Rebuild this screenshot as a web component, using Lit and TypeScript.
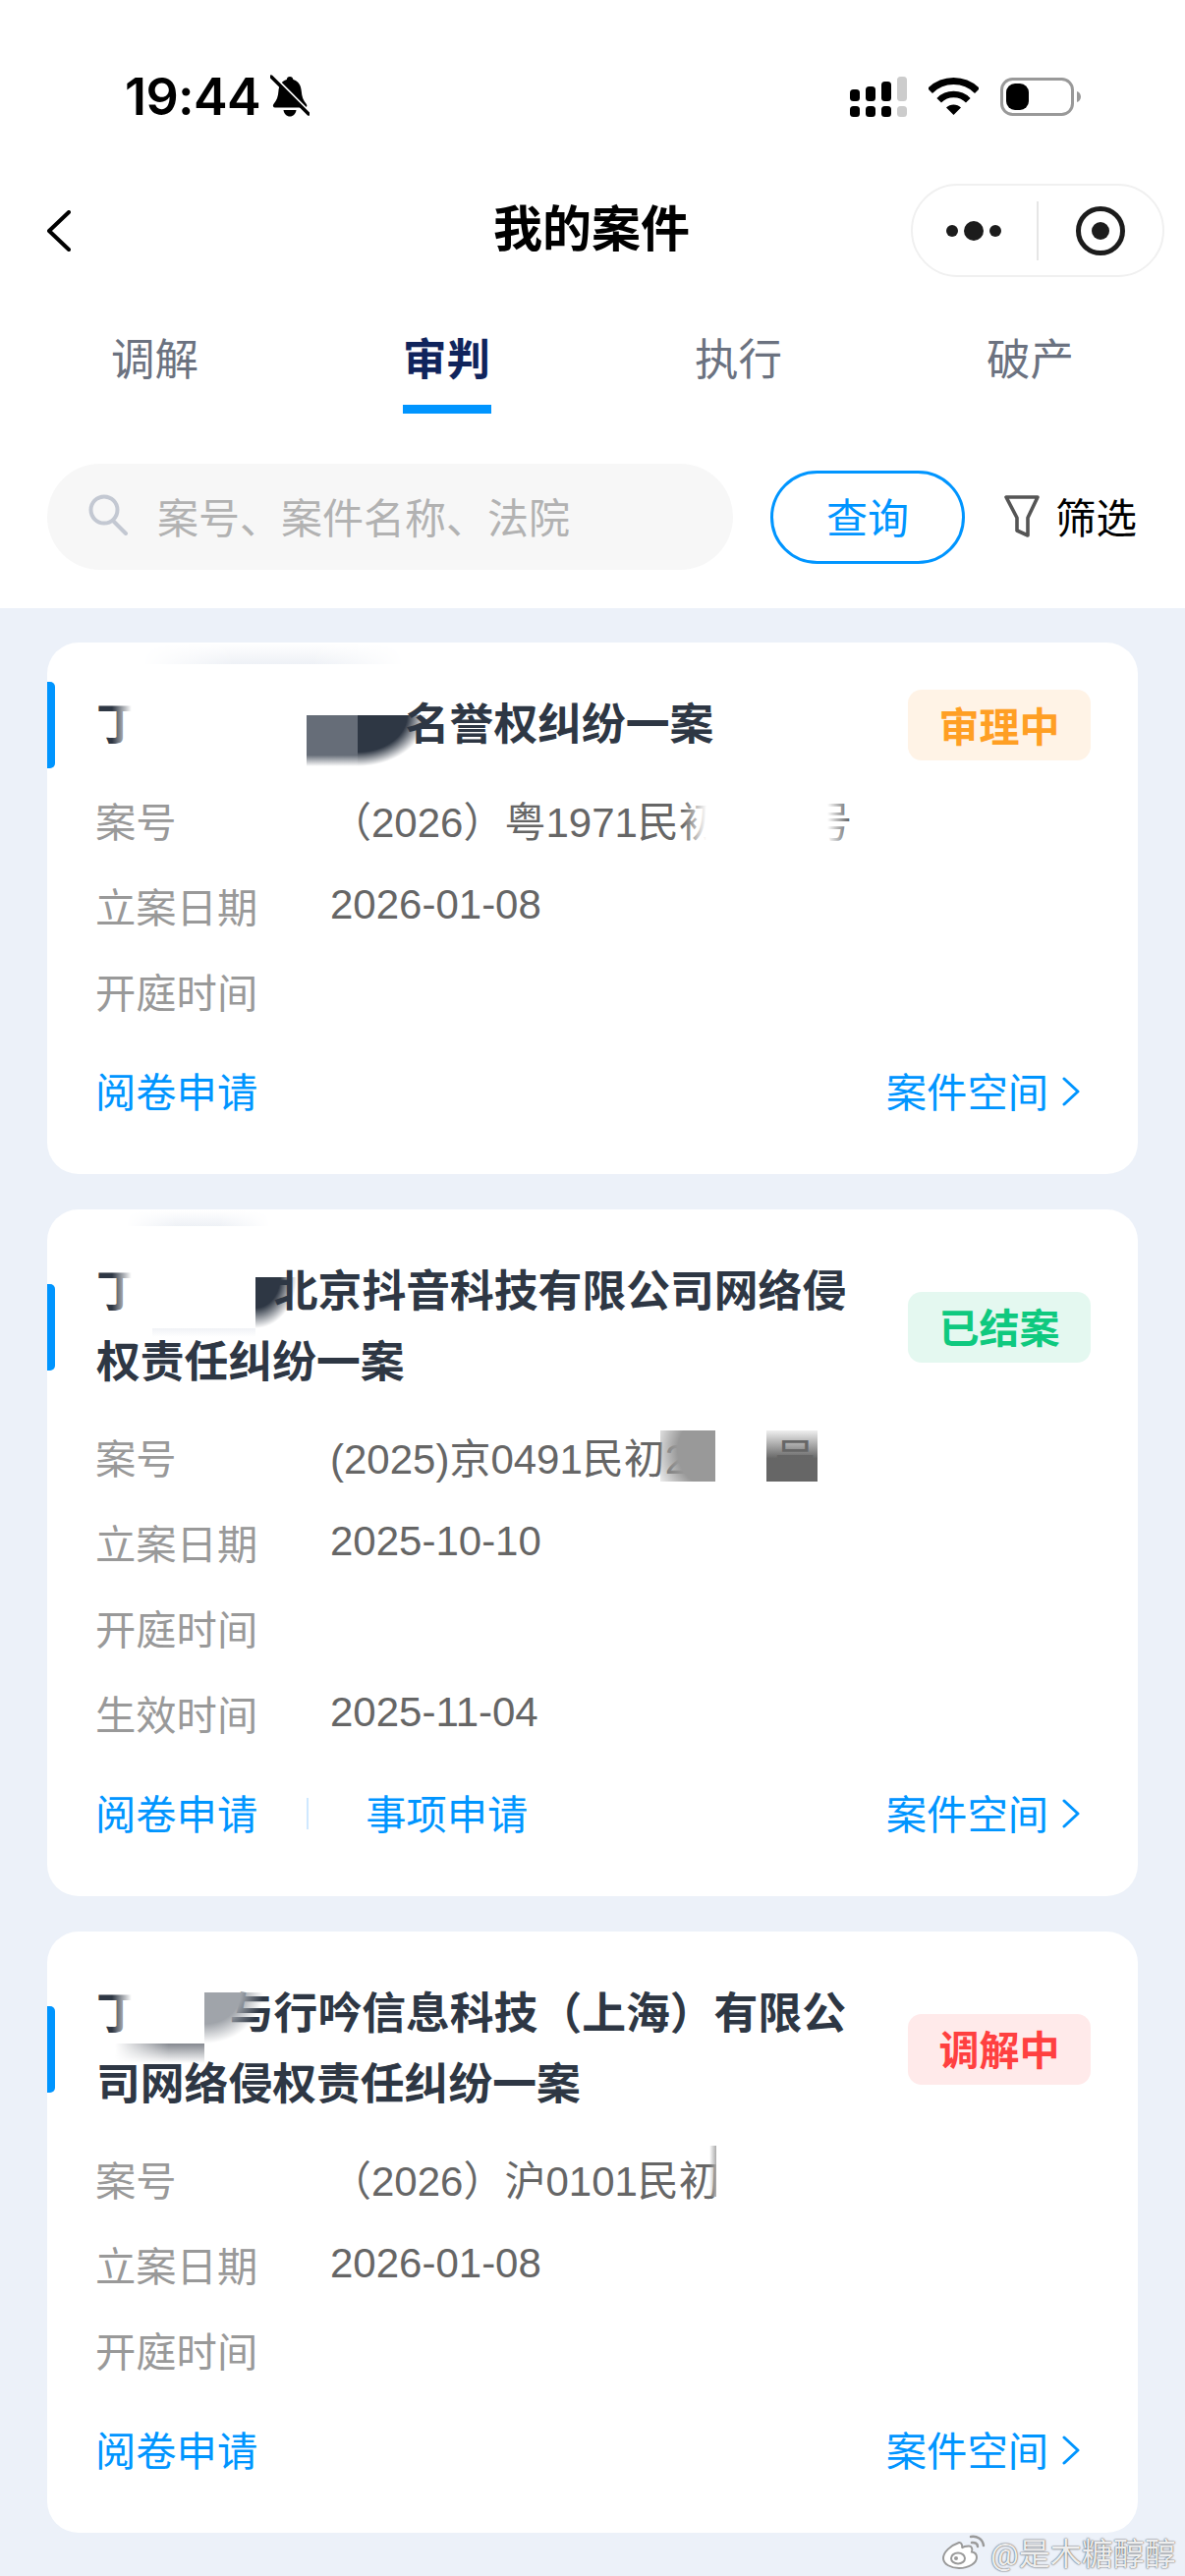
import { LitElement, html, css, svg, nothing } from "lit"
import { customElement } from "lit/decorators.js"

type Seg = [string, number, string]

interface Case {
  title: Seg
  titleMore?: string
  status: string
  tone: string
  rows: { label: string; value?: Seg | string }[]
  extra?: boolean
  patches: string[]
}

const cases: Case[] = [
  {
    title: ["丁", 270, "名誉权纠纷一案"],
    status: "审理中",
    tone: "orange",
    rows: [
      { label: "案号", value: ["（2026）粤1971民初", 92, "号"] },
      { label: "立案日期", value: "2026-01-08" },
      { label: "开庭时间" },
    ],
    patches: ["c1-smudge", "c1-fade", "c1-gray", "c1-dark", "c1-val-a", "c1-val-b"],
  },
  {
    title: ["丁", 136, "北京抖音科技有限公司网络侵"],
    titleMore: "权责任纠纷一案",
    status: "已结案",
    tone: "green",
    rows: [
      { label: "案号", value: ["(2025)京0491民初2", 88, "号"] },
      { label: "立案日期", value: "2025-10-10" },
      { label: "开庭时间" },
      { label: "生效时间", value: "2025-11-04" },
    ],
    extra: true,
    patches: ["c2-smudge", "c2-fade", "c2-dark", "c2-low", "c2-val-a", "c2-val-b"],
  },
  {
    title: ["丁", 91, "与行吟信息科技（上海）有限公"],
    titleMore: "司网络侵权责任纠纷一案",
    status: "调解中",
    tone: "red",
    rows: [
      { label: "案号", value: "（2026）沪0101民初" },
      { label: "立案日期", value: "2026-01-08" },
      { label: "开庭时间" },
    ],
    patches: ["c3-fade", "c3-gray", "c3-low", "c3-strip"],
  },
]

const tabs = ["调解", "审判", "执行", "破产"]

const bell = svg`<svg class="bell" width="40" height="44" viewBox="0 0 40 44">
  <path d="M20 2c2 0 3 1.300 3.400 3 5.600 1.600 8 6.200 8.400 12 .3 5 1.700 9 5 13 1.200 1.600.4 3.500-1.600 3.500H5c-2 0-2.800-1.900-1.600-3.500 3.300-4 4.700-8 5-13 .4-5.800 2.800-10.400 8.400-12C17 3.300 18 2 20 2z" fill="#000"/>
  <path d="M13.500 36h13c-.6 4-3.200 6.500-6.500 6.500S14.100 40 13.500 36z" fill="#000"/>
  <path d="M-1 4 37 42" stroke="#fff" stroke-width="4" transform="translate(3 -3)"/>
  <path d="M1 2 39 40" stroke="#000" stroke-width="3.400" stroke-linecap="round"/>
</svg>`

const signal = svg`<svg width="58" height="41" viewBox="0 0 58 41">
  <rect x="0" y="13" width="10" height="12" rx="3.500"/>
  <rect x="16" y="10" width="10" height="15" rx="3.500"/>
  <rect x="32" y="5" width="10" height="20" rx="3.500"/>
  <rect x="48" y="0" width="10" height="25" rx="3.500" fill="#ccc"/>
  <rect x="0" y="30" width="10" height="11" rx="3.500"/>
  <rect x="16" y="30" width="10" height="11" rx="3.500"/>
  <rect x="32" y="30" width="10" height="11" rx="3.500"/>
  <rect x="48" y="30" width="10" height="11" rx="3.500" fill="#ccc"/>
</svg>`

const wifi = svg`<svg width="51" height="38" viewBox="0 0 51 38" fill="none" stroke="#000">
  <path d="M1.500 13.500a34 34 0 0 1 48 0" stroke-width="7"/>
  <path d="M10.700 23.200a21 21 0 0 1 29.600 0" stroke-width="6.500"/>
  <path d="M25.500 38 18 30.500a10.600 10.600 0 0 1 15 0z" fill="#000" stroke="none"/>
</svg>`

const battery = svg`<svg width="82" height="39" viewBox="0 0 82 39">
  <rect x="1.500" y="1.500" width="72" height="36" rx="11" fill="#fff" stroke="#999" stroke-width="3"/>
  <rect x="6" y="6" width="23" height="27" rx="9" fill="#000"/>
  <path d="M78 14c2.500.8 4 3 4 5.500S80.500 24.200 78 25z" fill="#999"/>
</svg>`

const back = svg`<svg width="24" height="42" viewBox="0 0 24 42" fill="none">
  <path d="M22 2 2 21l20 19" stroke="#000" stroke-width="4" stroke-linecap="round" stroke-linejoin="round"/>
</svg>`

const dots = svg`<svg width="58" height="22" viewBox="0 0 58 22" fill="#1c1c1c">
  <circle cx="6" cy="11" r="6"/><circle cx="28" cy="11" r="10"/><circle cx="50" cy="11" r="6"/>
</svg>`

const target = svg`<svg width="52" height="52" viewBox="0 0 52 52" fill="none">
  <circle cx="26" cy="26" r="22.500" stroke="#1c1c1c" stroke-width="5"/>
  <circle cx="26" cy="26" r="9" fill="#1c1c1c"/>
</svg>`

const search = svg`<svg class="s-icon" width="42" height="42" viewBox="0 0 42 42" fill="none" stroke="#c3c8d2" stroke-width="4" stroke-linecap="round">
  <circle cx="16" cy="16" r="13.500"/><path d="M26 28l12 12"/>
</svg>`

const funnel = svg`<svg width="38" height="46" viewBox="0 0 38 46" fill="none">
  <path d="M3 3h32L25 24v18l-11-5V24z" stroke="#555" stroke-width="3.600" stroke-linejoin="round"/>
</svg>`

const chevron = svg`<svg width="20" height="30" viewBox="0 0 20 30" fill="none">
  <path d="M3 2l14 13L3 28" stroke="#0095ff" stroke-width="3" stroke-linecap="round" stroke-linejoin="round"/>
</svg>`

const weibo = svg`<svg width="46" height="36" viewBox="0 0 46 36" fill="none">
  <path d="M18 9C9 12 2 19 2 25c0 6 8 10 16 10 10 0 18-5 18-11 0-3-2-5-5-5.500 1-3 0-6-3-6-3 0-6 1-7 2 1-3-1-6-3-5.500z" fill="#fff" stroke="#9a9a9a" stroke-width="2"/>
  <ellipse cx="17" cy="25" rx="7" ry="5.500" stroke="#9a9a9a" stroke-width="2"/>
  <circle cx="15" cy="25" r="2" fill="#9a9a9a"/>
  <path d="M30 3c6-1 12 2 13 9M31 9c3-.5 6 1 6 4" stroke="#9a9a9a" stroke-width="2.500" stroke-linecap="round"/>
</svg>`

@customElement("app-root")
export class AppRoot extends LitElement {
  static styles = css`
    :host {
      display: block;
      position: relative;
      width: 1206px;
      min-height: 2622px;
      background: #ecf1f9;
      font-family: Roboto, "Noto Sans CJK SC", sans-serif;
    }
    * {
      box-sizing: border-box;
    }
    .head {
      background: #fff;
      height: 619px;
    }
    .status {
      height: 170px;
      padding: 26px 106px 0 127px;
      display: flex;
      align-items: center;
    }
    .time {
      font-family: Inter, sans-serif;
      font-size: 52px;
      font-weight: 600;
      letter-spacing: -0.6px;
      color: #000;
    }
    .bell {
      margin-left: 10px;
    }
    .sys {
      margin-left: auto;
      display: flex;
      align-items: center;
      gap: 22px;
    }
    .nav {
      height: 129px;
      display: grid;
      grid-template-columns: 454px auto 1fr;
      align-items: center;
      padding: 0 21px 0 48px;
    }
    .nav svg {
      display: block;
    }
    .nav h1 {
      margin: 0 0 11px;
      font-size: 50px;
      font-weight: 700;
      color: #000;
    }
    .capsule {
      justify-self: end;
      width: 258px;
      height: 95px;
      border: 2px solid #f0f0f0;
      border-radius: 48px;
      display: grid;
      grid-template-columns: 128px 1fr;
      align-items: center;
      justify-items: center;
    }
    .capsule .more {
      border-right: 2px solid #e6e6e6;
      width: 100%;
      height: 60px;
      display: flex;
      align-items: center;
      justify-content: center;
    }
    .tabs {
      display: grid;
      grid-template-columns: repeat(4, 297px);
      padding: 38px 9px 0;
    }
    .tab {
      display: flex;
      flex-direction: column;
      align-items: center;
      font-size: 44.5px;
      line-height: 60px;
      color: #6b7280;
    }
    .tab i {
      display: block;
      width: 90px;
      height: 9px;
      margin-top: 15px;
    }
    .tab.on {
      color: #10245c;
      font-weight: 700;
    }
    .tab.on i {
      background: #0095ff;
    }
    .tools {
      display: flex;
      align-items: center;
      margin-top: 51px;
      padding-left: 48px;
    }
    .search {
      width: 698px;
      height: 108px;
      border-radius: 54px;
      background: #f7f7f7;
      display: flex;
      align-items: center;
      padding: 0 0 3px 42px;
      font-size: 42px;
      color: #b2b2b2;
    }
    .s-icon {
      margin: -2px 28px 0 0;
    }
    .btn {
      width: 198px;
      height: 95px;
      margin-left: 38px;
      padding-bottom: 3px;
      border: 3px solid #0095ff;
      border-radius: 48px;
      display: flex;
      align-items: center;
      justify-content: center;
      font-size: 42px;
      color: #0095ff;
    }
    .filter {
      display: flex;
      align-items: center;
      gap: 15px;
      margin-left: 39px;
      font-size: 41.5px;
      color: #000;
    }
    .filter span {
      padding-bottom: 3px;
    }
    .list {
      display: flex;
      flex-direction: column;
      gap: 36px;
      padding: 35px 48px 0;
    }
    .card {
      position: relative;
      background: #fff;
      border-radius: 32px;
      padding: 48px 48px 54px 50px;
      overflow: hidden;
    }
    .top {
      position: relative;
      display: flex;
      align-items: center;
      justify-content: space-between;
      margin-bottom: 18px;
    }
    .bar {
      position: absolute;
      left: -50px;
      top: 50%;
      width: 8px;
      height: 88px;
      margin-top: -44px;
      background: #0095ff;
      border-radius: 0 5px 5px 0;
    }
    .title {
      width: 780px;
      font-size: 44.8px;
      line-height: 71.5px;
      font-weight: 700;
      color: #2e3744;
    }
    .gap {
      display: inline-block;
    }
    .badge {
      width: 186px;
      height: 72px;
      padding-bottom: 3px;
      border-radius: 14px;
      display: flex;
      align-items: center;
      justify-content: center;
      font-size: 41px;
      font-weight: 700;
    }
    .orange {
      background: #fff3e6;
      color: #ff9f24;
    }
    .green {
      background: #e4f8f0;
      color: #0fc97f;
    }
    .red {
      background: #ffeaea;
      color: #ff4040;
    }
    .row {
      display: grid;
      grid-template-columns: 239px 1fr;
      align-items: center;
      height: 87px;
      margin-left: -1px;
      font-size: 41.3px;
      color: #999;
    }
    .row span {
      padding-bottom: 4px;
    }
    .row span.v {
      font-family: "Liberation Sans", "Noto Sans CJK SC", sans-serif;
      font-size: 42px;
      color: #666;
    }
    .foot {
      display: flex;
      align-items: center;
      height: 60px;
      margin: 28px 0 0 -1px;
      padding-right: 10px;
      font-size: 41.3px;
      color: #0095ff;
    }
    .foot span {
      padding-bottom: 5px;
    }
    .sep {
      width: 2px;
      height: 32px;
      margin: 0 58px 0 50px;
      background: #cfe8ff;
    }
    .space {
      margin-left: auto;
      display: flex;
      align-items: center;
      gap: 13px;
    }
    .mask {
      position: absolute;
      pointer-events: none;
    }
    .c1-smudge,
    .c2-smudge {
      background: linear-gradient(#fff, #eef1f6);
      -webkit-mask-image: linear-gradient(to right, transparent, #000 35%, #000 65%, transparent);
    }
    .c1-smudge {
      left: 97px;
      top: 1px;
      width: 266px;
      height: 21px;
    }
    .c1-fade,
    .c2-fade,
    .c3-fade {
      width: 36px;
      height: 52px;
      left: 66px;
      background: linear-gradient(to right, transparent, #fff 55%);
    }
    .c1-fade {
      top: 60px;
    }
    .c1-gray {
      left: 264px;
      top: 74px;
      width: 52px;
      height: 52px;
      background: linear-gradient(#666d78 78%, transparent);
    }
    .c1-dark {
      left: 316px;
      top: 74px;
      width: 70px;
      height: 52px;
      background: radial-gradient(ellipse 70px 52px at 0 0, #2e3744 72%, transparent 100%);
    }
    .c1-val-a {
      left: 647px;
      top: 156px;
      width: 40px;
      height: 50px;
      background: linear-gradient(to right, transparent, #fff 60%);
    }
    .c1-val-b {
      left: 772px;
      top: 156px;
      width: 44px;
      height: 50px;
      background: linear-gradient(to right, #fff 50%, transparent);
    }
    .c2-smudge {
      left: 80px;
      top: 1px;
      width: 147px;
      height: 16px;
    }
    .c2-fade {
      top: 60px;
    }
    .c2-dark {
      left: 212px;
      top: 69px;
      width: 42px;
      height: 52px;
      background: radial-gradient(ellipse 42px 52px at 0 0, #2e3744 60%, transparent 100%);
    }
    .c2-low {
      left: 107px;
      top: 121px;
      width: 105px;
      height: 9px;
      background: linear-gradient(#f0f2f6, #fff);
    }
    .c2-val-a {
      left: 624px;
      top: 225px;
      width: 56px;
      height: 52px;
      background: radial-gradient(ellipse 70px 70px at 100% 40%, #999 55%, transparent 100%);
    }
    .c2-val-b {
      left: 732px;
      top: 225px;
      width: 52px;
      height: 52px;
      background: linear-gradient(rgba(102, 102, 102, 0.1), #666 55%);
    }
    .c3-fade {
      top: 62px;
    }
    .c3-gray {
      left: 160px;
      top: 62px;
      width: 60px;
      height: 52px;
      background: radial-gradient(ellipse 60px 52px at 0 0, #a0a4aa 62%, transparent 100%);
    }
    .c3-low {
      left: 69px;
      top: 114px;
      width: 91px;
      height: 20px;
      background: linear-gradient(#84888f, transparent);
      -webkit-mask-image: linear-gradient(to right, transparent, #000 60%);
    }
    .c3-strip {
      left: 674px;
      top: 218px;
      width: 20px;
      height: 52px;
      background: linear-gradient(to right, transparent, #aaa 7px, #fff 7px);
    }
    .mark {
      position: absolute;
      left: 958px;
      top: 2574px;
      display: flex;
      align-items: center;
      gap: 4px;
      font-size: 32px;
      color: rgba(255, 255, 255, 0.92);
      text-shadow: 0 0 2px rgba(0, 0, 0, 0.6), 0 0 1px rgba(0, 0, 0, 0.5);
    }
  `

  renderSeg(seg: Seg | string) {
    if (typeof seg === "string") return seg
    return html`${seg[0]}<span class="gap" style="width:${seg[1]}px"></span>${seg[2]}`
  }

  renderCase(c: Case) {
    return html`
      <div class="card">
        <div class="top">
          <div class="bar"></div>
          <div class="title">
            <div>${this.renderSeg(c.title)}</div>
            ${c.titleMore ? html`<div>${c.titleMore}</div>` : nothing}
          </div>
          <div class="badge ${c.tone}">${c.status}</div>
        </div>
        ${c.rows.map(
          (r) => html`<div class="row">
            <span>${r.label}</span>
            ${r.value ? html`<span class="v">${this.renderSeg(r.value)}</span>` : nothing}
          </div>`
        )}
        <div class="foot">
          <span>阅卷申请</span>
          ${c.extra ? html`<div class="sep"></div><span>事项申请</span>` : nothing}
          <div class="space"><span>案件空间</span>${chevron}</div>
        </div>
        ${c.patches.map((p) => html`<div class="mask ${p}"></div>`)}
      </div>
    `
  }

  render() {
    return html`
      <div class="head">
        <div class="status">
          <span class="time">19:44</span>
          ${bell}
          <div class="sys">${signal}${wifi}${battery}</div>
        </div>
        <div class="nav">
          <div>${back}</div>
          <h1>我的案件</h1>
          <div class="capsule">
            <div class="more">${dots}</div>
            ${target}
          </div>
        </div>
        <div class="tabs">
          ${tabs.map((t, i) => html`<div class="tab ${i === 1 ? "on" : ""}">${t}<i></i></div>`)}
        </div>
        <div class="tools">
          <div class="search">${search}案号、案件名称、法院</div>
          <div class="btn">查询</div>
          <div class="filter">${funnel}<span>筛选</span></div>
        </div>
      </div>
      <div class="list">${cases.map((c) => this.renderCase(c))}</div>
      <div class="mark">${weibo}<span>@是木糖醇醇</span></div>
    `
  }
}
